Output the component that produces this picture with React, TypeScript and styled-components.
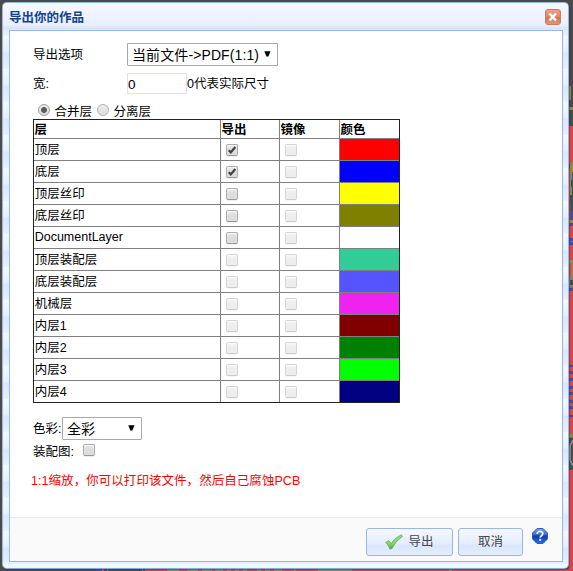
import React from "react";
import styled, { createGlobalStyle, css } from "styled-components";

const GlobalStyle = createGlobalStyle`
  * { box-sizing: border-box; }
  html, body { margin: 0; padding: 0; }
  body {
    background: #4a4a4a;
    overflow: hidden;
    font-family: "Liberation Sans", "Noto Sans CJK SC", sans-serif;
    font-size: 12.5px;
    color: #000;
  }
`;

const Desktop = styled.main`
  position: relative;
  width: 573px;
  height: 571px;
  padding: 2px 4px 2px 2px;
  overflow: hidden;
`;

const Board = styled.svg`
  position: absolute;
  inset: 0;
`;

const Dialog = styled.section`
  position: relative;
  display: flex;
  flex-direction: column;
  width: 567px;
  height: 567px;
  padding: 0 5px 6px 6px;
  border: 1px solid #95b8e7;
  border-bottom-color: #7fabe4;
  border-radius: 5px;
  box-shadow: 1px 1px 1px rgba(40, 40, 60, 0.35);
  background: linear-gradient(#f4f8ff 0, #e6effe 16px, #d9e6fc 17px, #e6effe 32px, #f0f5ff 33px) 0 0 / 100% 33px repeat-y;
`;

const TitleBar = styled.header`
  display: flex;
  flex: none;
  justify-content: space-between;
  height: 27px;
  margin: 0 -5px 0 -6px;
  padding: 6px 7px 0 6px;
  border-radius: 4px 4px 0 0;
  background: linear-gradient(#f5f9ff 0, #e7effe 23px, #dae6fc 24px, #dae6fc 27px);
`;

const Title = styled.h1`
  margin: 0;
  font-size: 12.5px;
  line-height: 18px;
  font-weight: bold;
  color: #15428b;
`;

const CloseButton = styled.button`
  display: block;
  width: 16px;
  height: 16px;
  padding: 0;
  border: 0;
  background: none;
  svg { display: block; }
`;

const Panel = styled.div`
  display: flex;
  flex: 1;
  flex-direction: column;
  border: 1px solid #95b8e7;
  background: #fff;
`;

const Content = styled.div`
  flex: 1;
  padding: 12px 0 0 23px;
`;

const Field = styled.div<{ $height: number; $gap?: number }>`
  display: flex;
  align-items: center;
  height: ${(p) => p.$height}px;
  margin-bottom: ${(p) => p.$gap ?? 0}px;
  white-space: pre;
`;

const Label = styled.label<{ $width?: number; $drop?: number }>`
  flex: none;
  width: ${(p) => (p.$width ? `${p.$width}px` : "auto")};
  padding-top: ${(p) => p.$drop ?? 0}px;
  line-height: 18px;
`;

const SelectBox = styled.button<{ $width: number }>`
  display: flex;
  align-items: center;
  justify-content: space-between;
  width: ${(p) => p.$width}px;
  height: 23px;
  padding: 1px 6px 0 4px;
  border: 1px solid #a9a9a9;
  border-radius: 1px;
  background: #fff;
  color: #000;
  font: 14px/20px "Liberation Sans", "Noto Sans CJK SC", sans-serif;
  letter-spacing: 0.1px;
  white-space: nowrap;
  svg { flex: none; margin-top: -3px; }
`;

const SizeInput = styled.input`
  width: 60px;
  height: 21px;
  padding: 1px 0 0;
  border: 1px solid #ddddff;
  outline: 0;
  font: 13.6px "Liberation Sans", sans-serif;
  color: #000;
`;

const Radio = styled.input.attrs({ type: "radio" })`
  appearance: none;
  flex: none;
  width: 12px;
  height: 12px;
  margin: 0 4.5px 1px 5px;
  border: 1px solid #b4b4b4;
  border-radius: 50%;
  background: linear-gradient(#ededed, #dcdcdc);
  &:checked {
    border-color: #a0a0a0;
    background: radial-gradient(circle, #5c5c5c 0 2.6px, transparent 3.3px), linear-gradient(#ededed, #dcdcdc);
  }
`;

const CheckFrame = styled.span`
  display: grid;
  flex: none;
  width: 12px;
  height: 12px;
  & > * { grid-area: 1 / 1; }
  svg { z-index: 1; pointer-events: none; }
`;

const CheckInput = styled.input.attrs({ type: "checkbox" })`
  appearance: none;
  width: 12px;
  height: 12px;
  margin: 0;
  border: 1px solid #adadad;
  border-bottom-color: #999;
  border-radius: 2px;
  background: linear-gradient(#ededed 0, #dedede 38%, #dcdcdc);
  box-shadow: 0 1px 0 rgba(0, 0, 0, 0.06), inset 0 1px 1px rgba(255, 255, 255, 0.7);
  &:disabled { opacity: 0.5; }
`;

const LayerTable = styled.div`
  display: grid;
  grid-template-columns: 187px 59px 60px 59px;
  width: 367px;
  margin: 0 0 14px;
  border: 1px solid #222;
`;

const cellLines = css<{ $last?: boolean; $end?: boolean }>`
  border-right: ${(p) => (p.$end ? 0 : 1)}px solid #808080;
  border-bottom: ${(p) => (p.$last ? 0 : 1)}px solid #808080;
`;

const HeadCell = styled.div<{ $end?: boolean }>`
  ${cellLines}
  height: 19px;
  padding-left: 0.5px;
  font-weight: bold;
  line-height: 20px;
`;

const NameCell = styled.div<{ $last?: boolean; $latin?: boolean }>`
  ${cellLines}
  height: ${(p) => (p.$last ? 21 : 22)}px;
  padding-left: 0.7px;
  line-height: ${(p) => (p.$latin ? 20 : 22)}px;
`;

const CheckCell = styled.div<{ $last?: boolean }>`
  ${cellLines}
  padding: 5px 0 0 5px;
`;

const Swatch = styled.div<{ $last?: boolean; $end?: boolean; $color: string }>`
  ${cellLines}
  background: ${(p) => p.$color};
`;

const Notice = styled.p`
  margin: 12px 0 0 -2px;
  line-height: 19px;
  letter-spacing: 0.05px;
  color: #f00;
  white-space: nowrap;
`;

const Footer = styled.footer`
  display: flex;
  flex: none;
  justify-content: flex-end;
  height: 44px;
  padding: 10px 14px 0 0;
  border-top: 1px solid #e8e8e8;
  background: #fafafa;
`;

const FooterButton = styled.button<{ $width: number }>`
  display: flex;
  align-items: center;
  justify-content: center;
  gap: 5px;
  width: ${(p) => p.$width}px;
  height: 28px;
  margin-right: 5px;
  padding: 0;
  border: 1px solid #95b8e7;
  border-radius: 3px;
  background: linear-gradient(#f4f8ff 0, #e4edfe 15px, #d9e6fc 16px, #e3edfe 26px);
  color: #444;
  font: 12.5px/18px "Liberation Sans", "Noto Sans CJK SC", sans-serif;
`;

const HelpButton = styled.button`
  width: 16px;
  height: 16px;
  margin-left: 4px;
  padding: 0;
  border: 0;
  background: none;
  svg { display: block; }
`;

type Layer = { name: string; color: string; checked?: boolean; enabled?: boolean };

const layers: Layer[] = [
  { name: "顶层", color: "#ff0000", checked: true, enabled: true },
  { name: "底层", color: "#0000ff", checked: true, enabled: true },
  { name: "顶层丝印", color: "#ffff00", enabled: true },
  { name: "底层丝印", color: "#808000", enabled: true },
  { name: "DocumentLayer", color: "#ffffff", enabled: true },
  { name: "顶层装配层", color: "#33cc99" },
  { name: "底层装配层", color: "#5555ff" },
  { name: "机械层", color: "#f022f0" },
  { name: "内层1", color: "#800000" },
  { name: "内层2", color: "#008000" },
  { name: "内层3", color: "#00ff00" },
  { name: "内层4", color: "#000080" },
];

const Arrow = () => (
  <svg width="7" height="6" viewBox="0 0 7 6">
    <path d="M.3 .3h6.2L4.4 5.6h-2z" fill="#000" />
  </svg>
);

const Check = ({ checked = false, disabled = false }: { checked?: boolean; disabled?: boolean }) => (
  <CheckFrame>
    <CheckInput defaultChecked={checked} disabled={disabled} />
    {checked && (
      <svg width="12" height="12" viewBox="0 0 12 12">
        <path d="M2.8 6.2 4.8 8.4 9.3 3" fill="none" stroke="#404040" strokeWidth="2.2" />
      </svg>
    )}
  </CheckFrame>
);

/* Strips of circuit board that stay visible around the dialog. */
const rightTraces: [number, number, string][] = [
  [107, 3, "#8c8c46"],
  [126, 445, "#dc4648"],
  [165, 4, "#4a4a9c"],
  [180, 40, "#4a4a9c"],
  [220, 3, "#8c8c46"],
  [223, 3, "#4a4a9c"],
  [238, 3, "#4a4a9c"],
  [242, 3, "#4a4a9c"],
  [260, 3, "#8c8c46"],
  [277, 10, "#808080"],
  [288, 3, "#4a4a9c"],
  [365, 2, "#4a4a9c"],
  [371, 3, "#4a4a9c"],
  [378, 3, "#4a4a9c"],
  [386, 3, "#4a4a9c"],
  [392, 3, "#4a4a9c"],
  [400, 3, "#4a4a9c"],
  [406, 3, "#4a4a9c"],
  [415, 2, "#4a4a9c"],
  [434, 3, "#8c8c46"],
  [438, 32, "#4a4a4a"],
];

const bottomTraces: [number, number, string][] = [
  [96, 6, "#4a4a9c"],
  [102, 2, "#dc4648"],
  [107, 1, "#888"],
  [142, 1, "#888"],
  [145, 428, "#c94845"],
  [167, 12, "#8c8c46"],
  [187, 11, "#8c8c46"],
  [202, 10, "#8c8c46"],
  [215, 8, "#8c8c46"],
  [227, 4, "#8c8c46"],
  [235, 4, "#8c8c46"],
  [243, 4, "#8c8c46"],
  [257, 4, "#8c8c46"],
  [265, 5, "#8c8c46"],
  [274, 8, "#8c8c46"],
  [294, 2, "#8c8c46"],
  [318, 34, "#8c8c46"],
  [449, 3, "#8c8c46"],
];

const CircuitBoard = () => (
  <Board width="573" height="571" viewBox="0 0 573 571" shapeRendering="crispEdges">
    {rightTraces.map(([y, h, color]) => (
      <rect key={y} x="569" y={y} width="4" height={h} fill={color} />
    ))}
    <rect x="569" y="86" width="2" height="14" fill="#8c8c46" />
    <path d="M571 162h2v26h-2l-1-4v-16z" fill="#8c8c46" />
    <rect x="572" y="172" width="1" height="8" fill="#4a4a9c" />
    <path d="M569 180h1v40h-1z" fill="#dc4648" />
    <path d="M571 180h2v31h-2v-8h-1v-14h1z" fill="#4a4a4a" />
    <path d="M570 185l2 3v7h-2z" fill="#8c8c46" />
    <rect x="571" y="263" width="2" height="14" fill="#a47c44" />
    <rect x="570" y="280" width="3" height="5" fill="#4a4a4a" />
    <path d="M573 440l-3 6v14l3 6" fill="none" stroke="#888" strokeWidth="2" />
    {bottomTraces.map(([x, w, color]) => (
      <rect key={x} x={x} y="569" width={w} height="2" fill={color} />
    ))}
  </Board>
);

const CloseIcon = () => (
  <svg width="16" height="16" viewBox="0 0 16 16">
    <defs>
      <linearGradient id="closeFill" x1="0" y1="0" x2="0" y2="1">
        <stop offset="0" stopColor="#eda187" />
        <stop offset=".45" stopColor="#e98862" />
        <stop offset=".55" stopColor="#dd6f49" />
        <stop offset="1" stopColor="#d99c78" />
      </linearGradient>
    </defs>
    <rect x=".5" y=".5" width="15" height="15" rx="2.5" fill="url(#closeFill)" stroke="#cb7961" />
    <path d="M4.5 4.5l6.5 7M11 4.5l-6.5 7" stroke="#b7b0b0" strokeWidth="3.2" />
    <path d="M4.5 4.5l6.5 7M11 4.5l-6.5 7" stroke="#fff" strokeWidth="2.1" />
  </svg>
);

const OkIcon = () => (
  <svg width="18" height="17" viewBox="0 0 18 17">
    <defs>
      <linearGradient id="okFill" x1="0" y1="0" x2="0" y2="1">
        <stop offset="0" stopColor="#9ad987" />
        <stop offset=".6" stopColor="#83d765" />
        <stop offset="1" stopColor="#55a83e" />
      </linearGradient>
    </defs>
    <path d="M.7 8.4 3.9 6.7 6.3 9.6C8.6 5.6 12 2.7 16.6 .9l.8 1.7C12.9 5.6 9.6 9.4 7 14.7l-2.2.3C4 12.4 2.8 10.4 .7 8.4Z" fill="url(#okFill)" stroke="#6aa65c" strokeWidth=".8" />
  </svg>
);

const HelpIcon = () => (
  <svg width="16" height="16" viewBox="0 0 16 16">
    <defs>
      <linearGradient id="helpFill" x1="0" y1="0" x2="0" y2="1">
        <stop offset="0" stopColor="#7aa3e2" />
        <stop offset=".4" stopColor="#386bca" />
        <stop offset=".5" stopColor="#0d3db1" />
        <stop offset="1" stopColor="#2470ea" />
      </linearGradient>
    </defs>
    <path d="M5 .5h6L15.5 5v6L11 15.5H5L.5 11V5z" fill="url(#helpFill)" stroke="#315fb9" strokeLinejoin="round" />
    <path d="M5.2 6C5 2.6 10.8 2.6 10.8 5.6c0 2.1-2.6 2.1-2.6 4" fill="none" stroke="#e8effc" strokeWidth="1.8" />
    <rect x="7.1" y="10.8" width="2.1" height="2.1" rx=".6" fill="#e8effc" />
  </svg>
);

export default function App() {
  return (
    <>
      <GlobalStyle />
      <Desktop>
        <CircuitBoard />
        <Dialog>
          <TitleBar>
            <Title>导出你的作品</Title>
            <CloseButton aria-label="关闭"><CloseIcon /></CloseButton>
          </TitleBar>
          <Panel>
            <Content>
              <Field $height={23} $gap={7}>
                <Label $width={94}>导出选项</Label>
                <SelectBox $width={151}>当前文件-&gt;PDF(1:1)<Arrow /></SelectBox>
              </Field>
              <Field $height={21} $gap={7}>
                <Label $width={94}>宽:</Label>
                <SizeInput defaultValue="0" />
                <Label>0代表实际尺寸</Label>
              </Field>
              <Field $height={18}>
                <Radio name="merge" defaultChecked />
                <Label $width={37.5} $drop={3}>合并层</Label>
                <Radio name="merge" />
                <Label $drop={3}>分离层</Label>
              </Field>
              <LayerTable>
                <HeadCell>层</HeadCell>
                <HeadCell>导出</HeadCell>
                <HeadCell>镜像</HeadCell>
                <HeadCell $end>颜色</HeadCell>
                {layers.map((layer, i) => {
                  const last = i === layers.length - 1;
                  return (
                    <React.Fragment key={layer.name}>
                      <NameCell $last={last} $latin={/^[A-Za-z]+$/.test(layer.name)}>{layer.name}</NameCell>
                      <CheckCell $last={last}><Check checked={layer.checked} disabled={!layer.enabled} /></CheckCell>
                      <CheckCell $last={last}><Check disabled /></CheckCell>
                      <Swatch $last={last} $end $color={layer.color} />
                    </React.Fragment>
                  );
                })}
              </LayerTable>
              <Field $height={23}>
                <Label $width={29} $drop={1}>色彩:</Label>
                <SelectBox $width={80}>全彩<Arrow /></SelectBox>
              </Field>
              <Field $height={20}>
                <Label $width={50} $drop={3}>装配图:</Label>
                <Check />
              </Field>
              <Notice>1:1缩放，你可以打印该文件，然后自己腐蚀PCB</Notice>
            </Content>
            <Footer>
              <FooterButton $width={87}><OkIcon />导出</FooterButton>
              <FooterButton $width={65}>取消</FooterButton>
              <HelpButton aria-label="帮助"><HelpIcon /></HelpButton>
            </Footer>
          </Panel>
        </Dialog>
      </Desktop>
    </>
  );
}
